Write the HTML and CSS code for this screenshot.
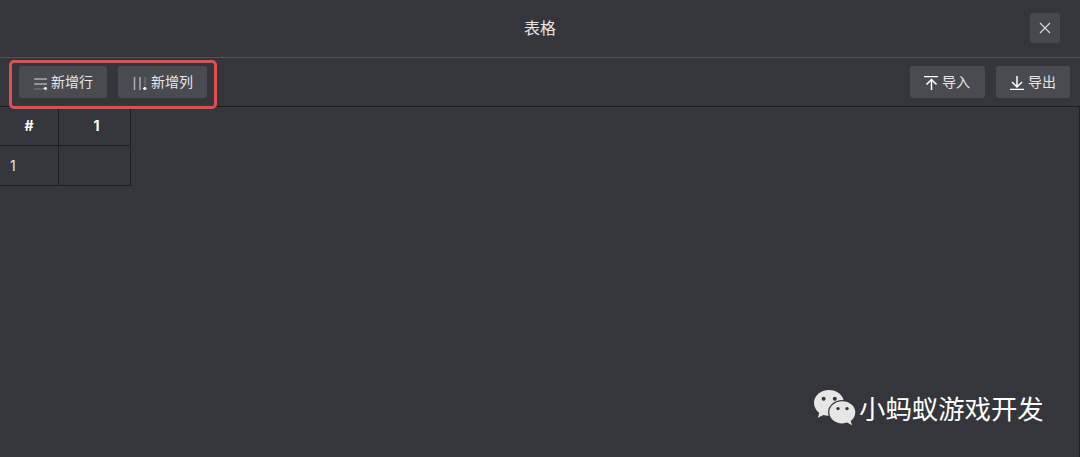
FILE: index.html
```html
<!DOCTYPE html>
<html lang="zh-CN">

<head>
    <meta charset="UTF-8">
    <meta name="viewport" content="width=device-width, initial-scale=1.0">
    <title>表格</title>
    <link rel="stylesheet" href="styles.css">
</head>

<body>
    <div class="dialog">
        <header class="header">
            <h1 class="title">表格</h1>
            <button class="close" type="button" aria-label="关闭">
                <svg width="12" height="12" viewBox="0 0 12 12">
                    <path d="M1 1L11 11M11 1L1 11" />
                </svg>
            </button>
        </header>

        <div class="toolbar">
            <div class="group">
                <button class="btn btn-row" type="button">
                    <svg width="14" height="14" viewBox="0 0 14 14">
                        <path class="line" d="M0 3H13M0 8H13" />
                        <path class="faint" d="M0 13H8" />
                        <path class="plus" d="M9.5 12.5H13M11.5 11V14" />
                    </svg>
                    <span>新增行</span>
                </button>
                <button class="btn btn-col" type="button">
                    <svg width="14" height="14" viewBox="0 0 14 14">
                        <path class="line" d="M1.5 1V14M7 1V14" />
                        <path class="faint" d="M12 1V10" />
                        <path class="plus" d="M10 12.5H13.5M11.8 11V14" />
                    </svg>
                    <span>新增列</span>
                </button>
            </div>
            <div class="group">
                <button class="btn btn-import" type="button">
                    <svg width="14" height="14" viewBox="0 0 14 14">
                        <path d="M0 .5H14M7.5 14V4M2.500 8.500L7.500 3.500L12.500 8.500" />
                    </svg>
                    <span>导入</span>
                </button>
                <button class="btn btn-export" type="button">
                    <svg width="14" height="14" viewBox="0 0 14 14">
                        <path d="M0 13.5H14M7 0V10.5M2 6L7 11L12 6" />
                    </svg>
                    <span>导出</span>
                </button>
            </div>
            <div class="highlight"></div>
        </div>

        <main class="sheet">
            <table>
                <thead>
                    <tr>
                        <th class="index">#</th>
                        <th class="cell">1</th>
                    </tr>
                </thead>
                <tbody>
                    <tr>
                        <td class="index">1</td>
                        <td class="cell"></td>
                    </tr>
                </tbody>
            </table>
        </main>

        <div class="watermark">
            <svg width="44" height="38" viewBox="0 0 44 38">
                <path class="bubble" d="M16 1C7.5 1 1 6.7 1 14C1 18.2 3.1 21.5 6.3 23.9L4.8 28.8L10.4 26.1C12.2 26.6 14 26.9 16 26.9C24.5 26.9 31 21.2 31 14C31 6.7 24.5 1 16 1Z" />
                <path class="bubble front" d="M29.3 12.2C22 12.2 16.3 17.1 16.3 23.3C16.3 29.5 22 34.4 29.3 34.4C31 34.4 32.7 34.1 34.2 33.6L39 36.2L37.7 32C40.6 29.900 42.3 26.9 42.3 23.3C42.3 17.1 36.6 12.2 29.3 12.2Z" />
                <g class="eyes">
                    <circle cx="10.6" cy="9.7" r="2" />
                    <circle cx="21.8" cy="9.7" r="2" />
                    <circle cx="25" cy="19.6" r="1.7" />
                    <circle cx="34" cy="19.6" r="1.7" />
                </g>
            </svg>
            <span>小蚂蚁游戏开发</span>
        </div>
    </div>
</body>

</html>
```

FILE: styles.css
```css
* {
    box-sizing: border-box;
}

body {
    margin: 0;
    background-color: #35363b;
    color: #e6e6e6;
    font-family: "Noto Sans", "Noto Sans CJK SC", sans-serif;
    font-size: 14px;
}

.dialog {
    position: relative;
    display: flex;
    flex-direction: column;
    height: 100vh;
    overflow: hidden;
}

.header {
    display: grid;
    grid-template-columns: 1fr auto 1fr;
    align-items: center;
    height: 58px;
    padding: 0 20px 2px;
    border-bottom: 1px solid #535459;
}

.title {
    grid-column: 2;
    margin: 0;
    font-size: 16px;
    font-weight: 400;
    line-height: 24px;
}

button {
    display: flex;
    align-items: center;
    padding: 0;
    border: none;
    border-radius: 3px;
    background-color: #4a4b50;
    color: #e6e6e6;
    font: inherit;
    cursor: pointer;
}

svg {
    flex: none;
    fill: none;
    stroke: #fff;
}

.close {
    justify-self: end;
    justify-content: center;
    width: 30px;
    height: 30px;
    background-color: #47484c;
}

.close svg {
    stroke: #dcdcdc;
    stroke-width: 1.1;
}

.toolbar {
    position: relative;
    display: flex;
    justify-content: space-between;
    height: 49px;
    padding: 8px 10px 8px 19px;
    border-bottom: 1px solid #1e1f23;
}

.group {
    display: flex;
    gap: 11px;
}

.btn {
    gap: 4px;
    height: 32px;
    padding-left: 14px;
    line-height: 20px;
    white-space: nowrap;
}

.btn svg {
    margin-top: 2px;
    stroke-width: 1.5;
}

.btn .line {
    stroke: #a9adaf;
}

.btn .faint {
    stroke: #6c6d70;
}

.btn-row {
    width: 88px;
    padding-left: 15px;
    gap: 3px;
}

.btn-col {
    width: 89px;
    padding-left: 15px;
}

.btn-import {
    width: 75px;
}

.btn-export {
    width: 74px;
}

/* frame around the add row / add column buttons */
.highlight {
    position: absolute;
    top: 2px;
    left: 9px;
    z-index: 1;
    width: 208px;
    height: 49px;
    border: 3px solid #e74b4b;
    border-radius: 5px;
    pointer-events: none;
}

.sheet {
    flex: 1;
    border-right: 1px solid #1e1f23;
}

table {
    border-collapse: separate;
    border-spacing: 0;
    table-layout: fixed;
    width: 131px;
    font-family: Inter, "Noto Sans", sans-serif;
}

th,
td {
    height: 40px;
    padding: 0 10px;
    border-right: 1px solid #1e1f23;
    border-bottom: 1px solid #1e1f23;
    line-height: 20px;
}

th {
    height: 39px;
    color: #fff;
    font-weight: 700;
}

th.cell {
    padding-left: 14px;
}

td {
    text-align: left;
}

.index {
    width: 59px;
}

.cell {
    width: 72px;
}

.watermark {
    position: absolute;
    left: 813px;
    top: 389px;
    display: flex;
    gap: 2px;
    color: #fff;
    font-size: 26.4px;
    line-height: 40px;
    white-space: nowrap;
}

.watermark .bubble {
    fill: #e6e6e6;
    stroke: none;
}

.watermark .front {
    stroke: #35363b;
    stroke-width: 2.5;
    paint-order: stroke;
}

.watermark .eyes {
    fill: #35363b;
    stroke: none;
}
```
